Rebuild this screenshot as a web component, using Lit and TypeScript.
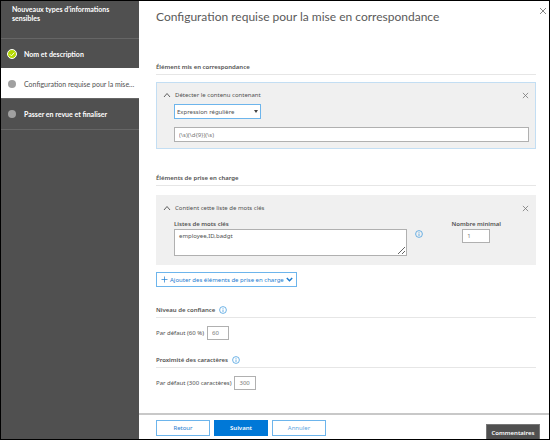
import { LitElement, html, css, svg } from "lit";
import { customElement, property } from "lit/decorators.js";
import { classMap } from "lit/directives/class-map.js";

const closeIcon = html`<svg viewBox="0 0 8 8" aria-hidden="true">
  <path d="M1 1L7 7M7 1L1 7" fill="none" stroke="currentColor" stroke-width="0.9" />
</svg>`;

const infoIcon = html`<svg viewBox="0 0 8 8" aria-hidden="true">
  <circle cx="4" cy="4" r="3.4" fill="none" stroke="currentColor" stroke-width="0.8" />
  <path d="M4 3.5V6M4 2V2.8" stroke="currentColor" stroke-width="0.8" />
</svg>`;

const chevronUp = html`<svg viewBox="0 0 8 8" aria-hidden="true">
  <path d="M1 6L4 2.5L7 6" fill="none" stroke="currentColor" stroke-width="0.9" />
</svg>`;

const shared = css`
  *,
  *::before,
  *::after {
    box-sizing: border-box;
  }
  button,
  input,
  select,
  textarea {
    font: inherit;
    color: inherit;
    margin: 0;
    border-radius: 0;
  }
  svg {
    display: block;
    width: 100%;
    height: 100%;
  }
`;

type StepState = "done" | "current" | "todo";

@customElement("wizard-nav")
export class WizardNav extends LitElement {
  static styles = [
    shared,
    css`
      :host {
        display: block;
        background: #505050;
        color: #fff;
        font-family: Lato, "Noto Sans", sans-serif;
        font-size: 7px;
      }
      .title {
        height: 37px;
        margin: 0;
        padding: 4px 8px 0 11px;
        font-size: inherit;
        line-height: 9px;
        font-weight: 700;
      }
      .steps {
        list-style: none;
        margin: 0;
        padding: 0;
      }
      .step {
        display: flex;
        align-items: center;
        gap: 7px;
        height: 30px;
        padding-left: 6px;
        border-top: 1px solid #666;
        font-weight: 700;
      }
      .step:last-child {
        height: 32px;
        border-bottom: 1px solid #666;
      }
      .step.current {
        background: #fff;
        border-color: #fff;
        color: #505050;
        font-weight: 400;
      }
      .mark {
        width: 10px;
        height: 10px;
        flex: none;
      }
      .label {
        color: inherit;
        text-decoration: none;
        white-space: nowrap;
      }
    `,
  ];

  private steps: { label: string; state: StepState }[] = [
    { label: "Nom et description", state: "done" },
    { label: "Configuration requise pour la mise…", state: "current" },
    { label: "Passer en revue et finaliser", state: "todo" },
  ];

  private mark(state: StepState) {
    return html`<svg viewBox="0 0 10 10" aria-hidden="true">
      ${state === "done"
        ? svg`<circle cx="5" cy="5" r="4.5" fill="#b4d800" stroke="#fff" />
            <path d="M2.8 5.2L4.4 6.8L7.4 3.6" fill="none" stroke="#fff" stroke-width="0.9" />`
        : svg`<circle cx="5" cy="5" r="4" fill="#a0a0a0" />`}
    </svg>`;
  }

  render() {
    return html`
      <h2 class="title">Nouveaux types d’informations sensibles</h2>
      <ol class="steps">
        ${this.steps.map(
          (s) => html`<li class=${classMap({ step: true, current: s.state === "current" })}>
            <span class="mark">${this.mark(s.state)}</span>
            <a class="label" href="#">${s.label}</a>
          </li>`
        )}
      </ol>
    `;
  }
}

@customElement("rule-card")
export class RuleCard extends LitElement {
  @property() heading = "";
  @property({ type: Boolean, reflect: true }) selected = false;

  static styles = [
    shared,
    css`
      :host {
        display: block;
        background: #f0f0f0;
        border: 1px solid #f0f0f0;
        padding: 7px 6px 6px 17px;
      }
      :host([selected]) {
        border-color: #c3def3;
      }
      .head {
        display: flex;
        align-items: center;
        height: 10px;
        margin-left: -11px;
      }
      .toggle {
        display: flex;
        align-items: center;
        gap: 4px;
        padding: 0;
        border: 0;
        background: none;
        color: #505050;
        line-height: 10px;
        white-space: nowrap;
      }
      .chevron {
        width: 8px;
        height: 8px;
        flex: none;
      }
      .close {
        width: 7px;
        height: 7px;
        flex: none;
        margin-left: auto;
        padding: 0;
        border: 0;
        background: none;
        color: #777;
      }
    `,
  ];

  render() {
    return html`
      <div class="head">
        <button class="toggle" aria-expanded="true">
          <span class="chevron">${chevronUp}</span>${this.heading}
        </button>
        <button class="close" aria-label="Supprimer">${closeIcon}</button>
      </div>
      <slot></slot>
    `;
  }
}

@customElement("app-root")
export class AppRoot extends LitElement {
  static styles = [
    shared,
    css`
      :host {
        display: grid;
        grid-template-columns: 138px minmax(0, 1fr);
        box-sizing: border-box;
        min-height: 100vh;
        border: 1px solid #000;
        background: #fff;
        color: #505050;
        font-family: "Noto Sans", "Open Sans", sans-serif;
        font-size: 6px;
        line-height: 10px;
      }
      .main {
        display: flex;
        flex-direction: column;
      }
      .top {
        display: flex;
        justify-content: space-between;
        align-items: flex-start;
        padding: 6px 2px 0 17px;
      }
      .page-title {
        margin: 0;
        font-family: Lato, "Noto Sans", sans-serif;
        font-size: 12px;
        line-height: 20px;
        font-weight: 400;
        color: #5a5a5a;
        white-space: nowrap;
      }
      .close {
        width: 8px;
        height: 8px;
        padding: 0;
        border: 0;
        background: none;
        color: #777;
      }
      .content {
        flex: 1;
        padding: 34px 13px 12px 17px;
      }
      .section {
        display: flex;
        align-items: center;
        gap: 4px;
        height: 14px;
        margin: 0 0 8px;
        padding-bottom: 2px;
        border-bottom: 1px solid #e6e6e6;
        font-size: inherit;
        line-height: 10px;
        font-weight: 600;
      }
      .section.first {
        margin-bottom: 7px;
      }
      .section.next {
        margin-top: 23px;
        margin-bottom: 9px;
      }
      .section.small {
        margin-top: 14px;
      }
      .info {
        width: 8px;
        height: 8px;
        flex: none;
        padding: 0;
        border: 0;
        background: none;
        color: #4a9fe0;
      }
      .field {
        display: block;
        border: 1px solid #b0b0b0;
        background: #fff;
        outline: 0;
      }
      .select-wrap {
        position: relative;
        width: 87px;
        margin-top: 4px;
      }
      .select {
        display: block;
        appearance: none;
        width: 100%;
        height: 15px;
        padding: 0 2px;
        border: 1px solid #6db5ec;
        background: #fff;
        outline: 0;
      }
      .arrow {
        position: absolute;
        right: 3px;
        top: 6px;
        width: 4px;
        height: 3px;
        background: #444;
        clip-path: polygon(0 0, 100% 0, 50% 100%);
      }
      .pattern {
        width: 100%;
        height: 15px;
        margin-top: 8px;
        padding: 0 4px;
        color: #777;
      }
      .columns {
        display: flex;
        align-items: flex-start;
        padding: 6px 28px 2px 0;
      }
      .keywords {
        flex: 1;
        max-width: 233px;
      }
      .label {
        display: block;
        font-weight: 600;
      }
      .words {
        width: 100%;
        height: 27px;
        padding: 1px 4px;
        resize: vertical;
      }
      .columns .info {
        margin: 11px 0 0 8px;
      }
      .minimum {
        margin-left: auto;
        display: flex;
        flex-direction: column;
        align-items: center;
      }
      .number {
        width: 22px;
        height: 14px;
        padding: 0 4px;
        color: #777;
      }
      .minimum .number {
        width: 28px;
      }
      .add {
        display: flex;
        align-items: center;
        gap: 2px;
        height: 15px;
        margin: 7px 0 17px;
        padding: 0 3px 0 4px;
        border: 1px solid #6db5ec;
        background: #fff;
        color: #1c7cd0;
        white-space: nowrap;
      }
      .glyph {
        width: 7px;
        height: 7px;
      }
      .row {
        display: flex;
        align-items: center;
        gap: 3px;
      }
      .footer {
        display: flex;
        align-items: flex-start;
        gap: 4px;
        height: 26px;
        padding: 5px 9px 0 17px;
        border-top: 2px solid #c8c8c8;
      }
      .btn {
        width: 54px;
        height: 16px;
        padding: 0;
        border: 1px solid #6db5ec;
        background: #fff;
        color: #1c7cd0;
      }
      .btn.primary {
        border-color: #0078d7;
        background: #0078d7;
        color: #fff;
        font-weight: 600;
      }
      .btn.quiet {
        color: #5aa5e0;
      }
      .feedback {
        align-self: flex-end;
        width: 54px;
        height: 15px;
        margin-left: auto;
        padding: 2px 0 0;
        border: 1px solid #777;
        border-bottom: 0;
        background: #505050;
        color: #fff;
        font-weight: 600;
      }
    `,
  ];

  render() {
    return html`
      <wizard-nav></wizard-nav>
      <div class="main">
        <header class="top">
          <h1 class="page-title">Configuration requise pour la mise en correspondance</h1>
          <button class="close" aria-label="Fermer">${closeIcon}</button>
        </header>
        <main class="content">
          <h2 class="section first">Élément mis en correspondance</h2>
          <rule-card heading="Détecter le contenu contenant" selected>
            <div class="select-wrap">
              <select class="select" aria-label="Type de contenu">
                <option>Expression régulière</option>
              </select>
              <span class="arrow"></span>
            </div>
            <input class="field pattern" aria-label="Expression" .value=${"(\\s)(\\d{9})(\\s)"} />
          </rule-card>

          <h2 class="section next">Éléments de prise en charge</h2>
          <rule-card heading="Contient cette liste de mots clés">
            <div class="columns">
              <div class="keywords">
                <label class="label" for="words">Listes de mots clés</label>
                <textarea class="field words" id="words" .value=${"employee,ID,badgt"}></textarea>
              </div>
              <button class="info" aria-label="Informations">${infoIcon}</button>
              <div class="minimum">
                <label class="label" for="min">Nombre minimal</label>
                <input class="field number" id="min" .value=${"1"} />
              </div>
            </div>
          </rule-card>
          <button class="add">
            <svg class="glyph" viewBox="0 0 7 7" aria-hidden="true">
              <path d="M3.5 0.5V6.5M0.5 3.5H6.5" stroke="currentColor" stroke-width="0.7" />
            </svg>
            Ajouter des éléments de prise en charge
            <svg class="glyph" viewBox="0 0 7 7" aria-hidden="true">
              <path d="M0.8 2L3.5 4.7L6.2 2" fill="none" stroke="currentColor" stroke-width="1.5" />
            </svg>
          </button>

          <h2 class="section small">
            Niveau de confiance
            <button class="info" aria-label="Informations">${infoIcon}</button>
          </h2>
          <div class="row">
            <label for="level">Par défaut (60 %)</label>
            <input class="field number" id="level" .value=${"60"} />
          </div>

          <h2 class="section small">
            Proximité des caractères
            <button class="info" aria-label="Informations">${infoIcon}</button>
          </h2>
          <div class="row">
            <label for="near">Par défaut (300 caractères)</label>
            <input class="field number" id="near" .value=${"300"} />
          </div>
        </main>
        <footer class="footer">
          <button class="btn">Retour</button>
          <button class="btn primary">Suivant</button>
          <button class="btn quiet">Annuler</button>
          <button class="feedback">Commentaires</button>
        </footer>
      </div>
    `;
  }
}
